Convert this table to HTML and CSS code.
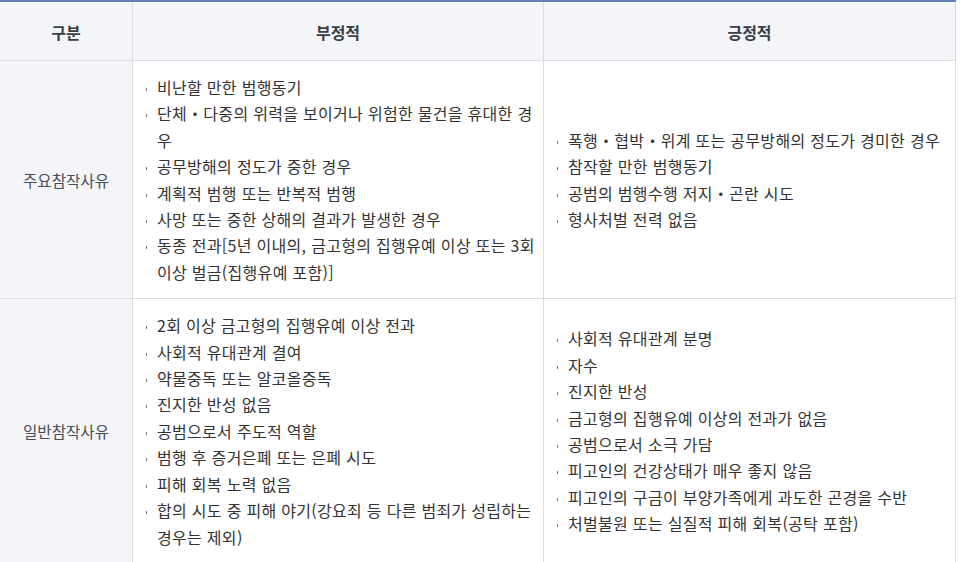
FILE: index.html
```html
<!DOCTYPE html>
<html lang="ko">
<head>
<meta charset="utf-8">
<title>양형인자</title>
<link rel="stylesheet" href="styles.css">
</head>
<body>
<div class="table">
  <div class="cell head">구분</div>
  <div class="cell head">부정적</div>
  <div class="cell head">긍정적</div>

  <div class="cell label">주요참작사유</div>
  <div class="cell body">
    <ul class="list">
      <li>비난할 만한 범행동기</li>
      <li>단체・다중의 위력을 보이거나 위험한 물건을 휴대한 경우</li>
      <li>공무방해의 정도가 중한 경우</li>
      <li>계획적 범행 또는 반복적 범행</li>
      <li>사망 또는 중한 상해의 결과가 발생한 경우</li>
      <li>동종 전과[5년 이내의, 금고형의 집행유예 이상 또는 3회 이상 벌금(집행유예 포함)]</li>
    </ul>
  </div>
  <div class="cell body">
    <ul class="list">
      <li>폭행・협박・위계 또는 공무방해의 정도가 경미한 경우</li>
      <li>참작할 만한 범행동기</li>
      <li>공범의 범행수행 저지・곤란 시도</li>
      <li>형사처벌 전력 없음</li>
    </ul>
  </div>

  <div class="cell label">일반참작사유</div>
  <div class="cell body">
    <ul class="list">
      <li>2회 이상 금고형의 집행유예 이상 전과</li>
      <li>사회적 유대관계 결여</li>
      <li>약물중독 또는 알코올중독</li>
      <li>진지한 반성 없음</li>
      <li>공범으로서 주도적 역할</li>
      <li>범행 후 증거은폐 또는 은폐 시도</li>
      <li>피해 회복 노력 없음</li>
      <li>합의 시도 중 피해 야기(강요죄 등 다른 범죄가 성립하는 경우는 제외)</li>
    </ul>
  </div>
  <div class="cell body">
    <ul class="list">
      <li>사회적 유대관계 분명</li>
      <li>자수</li>
      <li>진지한 반성</li>
      <li>금고형의 집행유예 이상의 전과가 없음</li>
      <li>공범으로서 소극 가담</li>
      <li>피고인의 건강상태가 매우 좋지 않음</li>
      <li>피고인의 구금이 부양가족에게 과도한 곤경을 수반</li>
      <li>처벌불원 또는 실질적 피해 회복(공탁 포함)</li>
    </ul>
  </div>
</div>
</body>
</html>
```

FILE: styles.css
```css
* { box-sizing: border-box; }
html, body { margin: 0; padding: 0; background: #fff; }
body {
  font-family: "Noto Sans CJK KR", "Noto Sans", sans-serif;
  font-size: 16px;
  color: #333;
}
.table {
  width: 956px;
  display: grid;
  grid-template-columns: 133px 411px 412px;
  border-top: 2px solid #6280bd;
}
.cell {
  border-right: 1px solid #dcdde2;
  border-bottom: 1px solid #dcdde2;
  display: flex;
  align-items: center;
}
.head {
  height: 59px;
  background: #f4f5f9;
  justify-content: center;
  font-weight: 700;
  color: #3a3e48;
  padding-top: 2px;
}
.label {
  background: #f4f5f9;
  justify-content: center;
  color: #4a4d55;
  font-size: 15.6px;
}
.body {
  padding: 13px 0 13px 12px;
}
.list {
  list-style: none;
  margin: 0;
  padding: 0;
  line-height: 26.4px;
  letter-spacing: 0.3px;
}
.list li {
  position: relative;
  padding-left: 12px;
}
.list li::before {
  content: "";
  position: absolute;
  left: 1px;
  top: 14px;
  width: 1px;
  height: 3px;
  background: #777;
}
```
